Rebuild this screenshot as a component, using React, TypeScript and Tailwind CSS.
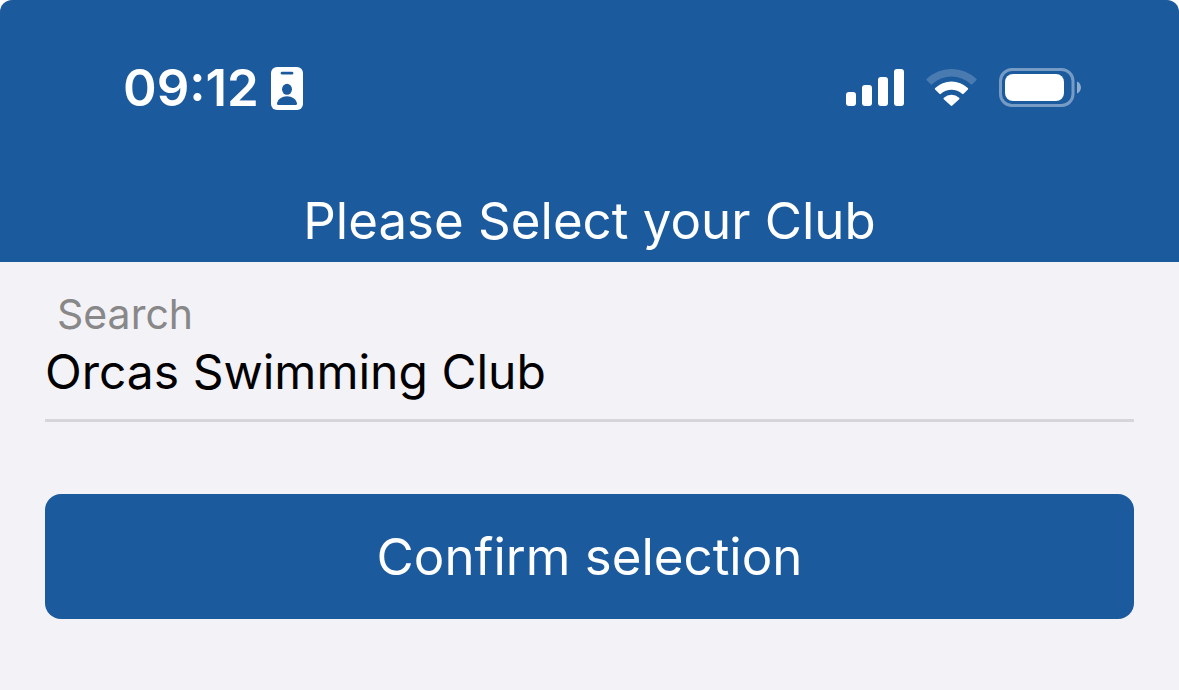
import React, { useState } from 'react';

const IdBadgeIcon = () => (
  <svg width="32" height="43" viewBox="0 0 32 43" aria-hidden="true">
    <rect width="32" height="43" rx="6" fill="#fff" />
    <rect x="9.700" y="4.800" width="12.600" height="2.800" rx="1.300" fill="#1c5a9e" />
    <ellipse cx="16" cy="22.300" rx="5" ry="5.500" fill="#1c5a9e" />
    <path d="M7 38 Q5.800 38 6 36.600 C6.800 32 11 29.200 16 29.200 C21 29.200 25.200 32 26 36.600 Q26.200 38 25 38 Z" fill="#1c5a9e" />
  </svg>
);

const SignalIcon = () => (
  <svg width="58" height="37" viewBox="0 0 58 37" fill="#fff" aria-hidden="true">
    <rect y="23" width="10" height="14" rx="3" />
    <rect x="16" y="16" width="10" height="21" rx="3" />
    <rect x="32" y="8" width="10" height="29" rx="3" />
    <rect x="48" width="10" height="37" rx="3" />
  </svg>
);

const WifiIcon = () => (
  <svg width="51" height="37" viewBox="0 0 51 37" fill="#fff" aria-hidden="true">
    <path
      opacity="0.2"
      d="M0.700 11.300 Q0 10.500 0.800 9.800 A36 36 0 0 1 50.200 9.800 Q51 10.500 50.300 11.300 L46.300 15.300 Q45.600 16 44.800 15.300 A28 28 0 0 0 6.200 15.300 Q5.400 16 4.700 15.300 Z"
    />
    <path d="M9.100 20.500 Q8.400 19.800 9.200 19 A23.700 23.700 0 0 1 41.800 19 Q42.600 19.800 41.900 20.500 L37.600 24.800 Q36.900 25.500 36.100 24.800 A16 16 0 0 0 14.900 24.800 Q14.100 25.500 13.400 24.800 Z" />
    <path d="M17.800 30.200 Q17.100 29.400 17.900 28.700 A11.500 11.500 0 0 1 33.100 28.700 Q33.900 29.400 33.200 30.200 L26.300 36.600 Q25.500 37.300 24.700 36.600 Z" />
  </svg>
);

const BatteryIcon = () => (
  <svg width="82" height="39" viewBox="0 0 82 39" aria-hidden="true">
    <rect x="1.500" y="1.500" width="72.500" height="36" rx="11.500" fill="none" stroke="#fff" strokeOpacity="0.4" strokeWidth="3" />
    <rect x="6" y="6" width="59" height="27" rx="8" fill="#fff" />
    <path d="M78 13.500 C83.300 15.500 83.300 23.500 78 25.500 Z" fill="#fff" fillOpacity="0.5" />
  </svg>
);

export default function App() {
  const [club, setClub] = useState('Orcas Swimming Club');

  return (
    <div className="min-h-screen rounded-t-xl bg-[#f3f2f7] font-['Inter',sans-serif]">
      <header className="rounded-t-xl bg-[#1c5a9e] text-white">
        {/* Status bar */}
        <div className="flex items-start justify-between pt-14 pr-[98px] pl-[123px]">
          <div className="flex h-16 items-center gap-3">
            <span className="text-[51px] font-semibold">09:12</span>
            <IdBadgeIcon />
          </div>
          <div className="flex items-center gap-[22px] pt-3">
            <SignalIcon />
            <WifiIcon />
            <BatteryIcon />
          </div>
        </div>

        <h1 className="pt-[70px] pb-2.5 text-center text-[51px] leading-[62px]">Please Select your Club</h1>
      </header>

      <main className="px-[45px] pt-6">
        <div className="border-b-3 border-[#d6d5da] pb-[18px]">
          <label htmlFor="club" className="block pl-3 text-[41px] leading-14 text-[#888888]">
            Search
          </label>
          <input
            id="club"
            type="text"
            value={club}
            onChange={(e) => setClub(e.target.value)}
            className="block h-[59px] w-full text-[48px] text-black outline-none"
          />
        </div>

        <button type="button" className="mt-[72px] w-full rounded-2xl bg-[#1c5a9e] pt-[29px] pb-7 text-[51px] leading-17 text-white">
          Confirm selection
        </button>
      </main>
    </div>
  );
}
